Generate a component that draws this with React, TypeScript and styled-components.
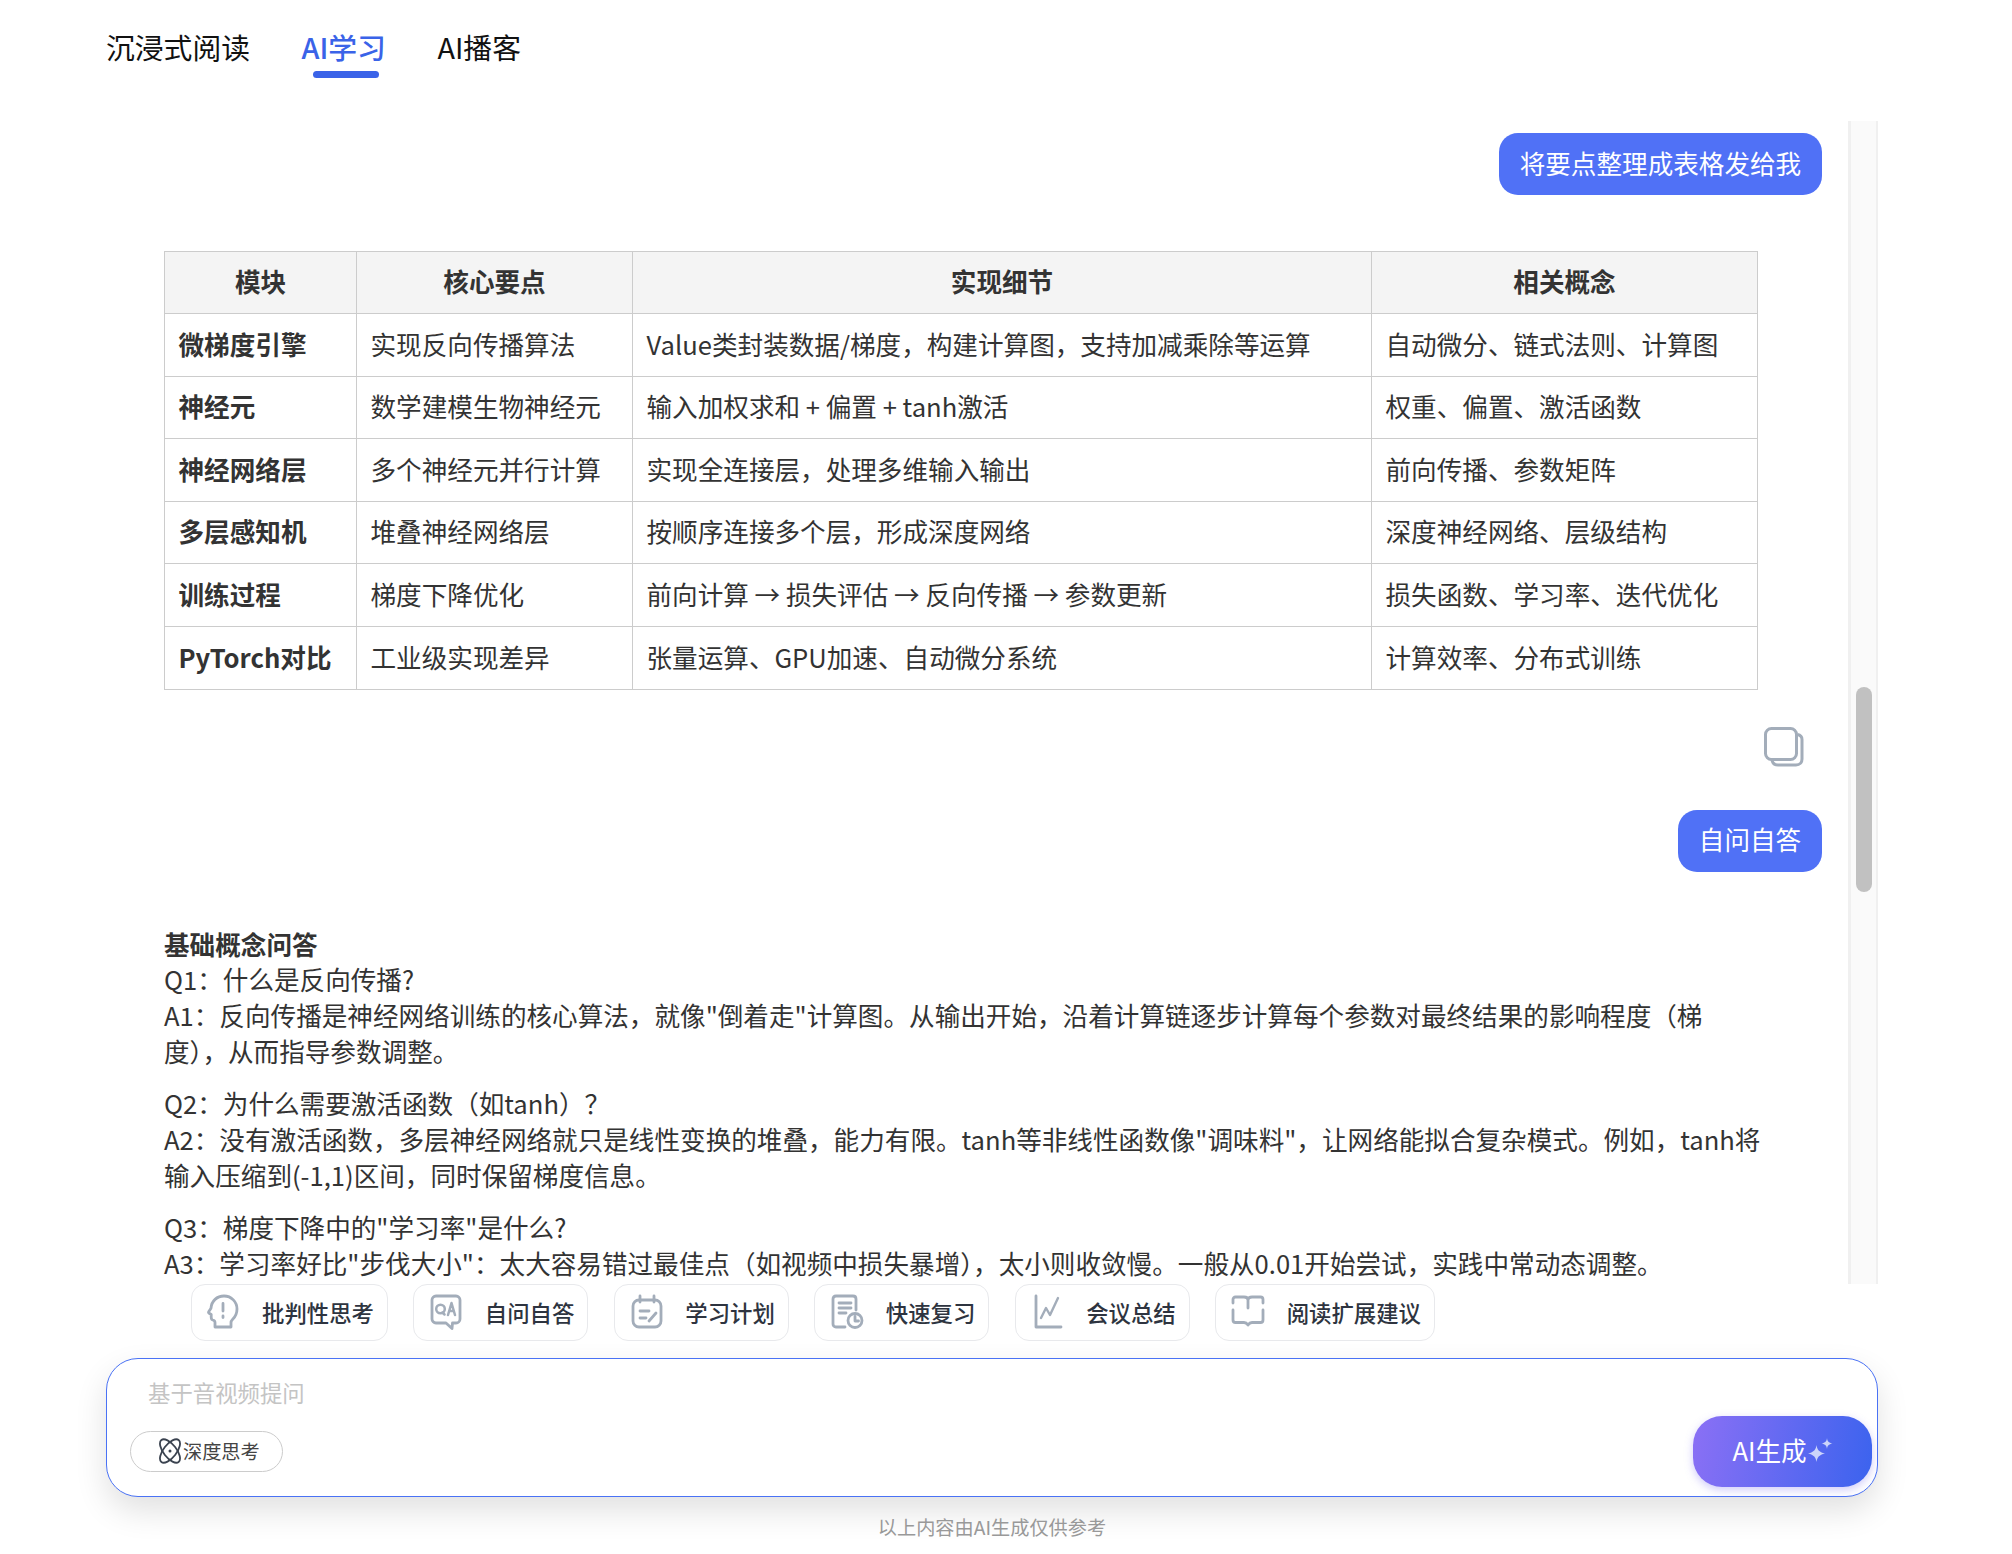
import type { ReactNode } from "react";
import styled, { createGlobalStyle } from "styled-components";

const GlobalStyle = createGlobalStyle`
  html, body {
    margin: 0;
    padding: 0;
    background: #fff;
  }
  body {
    font-family: "Noto Sans CJK SC", "Noto Sans", sans-serif;
    overflow: hidden;
  }
`;

const tableRows = [
  ["微梯度引擎", "实现反向传播算法", "Value类封装数据/梯度，构建计算图，支持加减乘除等运算", "自动微分、链式法则、计算图"],
  ["神经元", "数学建模生物神经元", "输入加权求和 + 偏置 + tanh激活", "权重、偏置、激活函数"],
  ["神经网络层", "多个神经元并行计算", "实现全连接层，处理多维输入输出", "前向传播、参数矩阵"],
  ["多层感知机", "堆叠神经网络层", "按顺序连接多个层，形成深度网络", "深度神经网络、层级结构"],
  ["训练过程", "梯度下降优化", "前向计算 → 损失评估 → 反向传播 → 参数更新", "损失函数、学习率、迭代优化"],
  ["PyTorch对比", "工业级实现差异", "张量运算、GPU加速、自动微分系统", "计算效率、分布式训练"],
];

const IconSvg = ({ children }: { children: ReactNode }) => (
  <svg width="34" height="36" viewBox="0 0 34 36" fill="none" stroke="#a3adba" strokeWidth="2.800" strokeLinecap="round" strokeLinejoin="round">
    {children}
  </svg>
);

const chips: { label: string; icon: ReactNode }[] = [
  {
    label: "批判性思考",
    icon: (
      <IconSvg>
        <path d="M8 33v-4.500c0-1.500-1-2.200-2.200-2.500-1.800-.5-1.600-2-1.600-3.500v-2L1.800 19c-.6-.5-.3-1 .2-1.800l2-3C4.500 7 10 2 17 2c7.500 0 13 6 13 13 0 4.500-1.800 8-4.500 10.500-1 1-1.500 1.800-1.500 3.300V33z" />
        <path d="M16 9.500v7.500M16 22v1.500" />
      </IconSvg>
    ),
  },
  {
    label: "自问自答",
    icon: (
      <IconSvg>
        <path d="M7 2h20c2.200 0 4 1.800 4 4v19c0 2.200-1.800 4-4 4h-3.500l-.5 5.500-6-5.500H7c-2.200 0-4-1.800-4-4V6c0-2.200 1.800-4 4-4z" />
        <circle cx="11.500" cy="15" r="4.300" strokeWidth="2.500" />
        <path d="M13.500 18.500l2 2M19 21l3.500-12 3.500 12M20.200 17h4.600" strokeWidth="2.500" />
      </IconSvg>
    ),
  },
  {
    label: "学习计划",
    icon: (
      <IconSvg>
        <rect x="3" y="6" width="28" height="27" rx="6" />
        <path d="M10 2v6M24 2v6M10 17h9M10 24h6M19 27l7-8" />
      </IconSvg>
    ),
  },
  {
    label: "快速复习",
    icon: (
      <IconSvg>
        <path d="M15 33H6c-2 0-3-1.300-3-3V5c0-1.800 1-3 3-3h17c2 0 3 1.200 3 3v11" />
        <path d="M9 9h12M9 14h12M9 19h7" />
        <circle cx="25" cy="26.500" r="7" />
        <path d="M25 22.500v4.500h3.500" />
      </IconSvg>
    ),
  },
  {
    label: "会议总结",
    icon: (
      <IconSvg>
        <path d="M5 2v31h25" />
        <path d="M10 24l5-10 4 7 8-17" strokeWidth="2.400" />
      </IconSvg>
    ),
  },
  {
    label: "阅读扩展建议",
    icon: (
      <IconSvg>
        <path d="M2 9V5.500C2 4 3 3 4.500 3h8.500c2.500 0 4 1 4 3 0-2 1.500-3 4-3h8.500C31 3 32 4 32 5.500V9M2 16v10c0 1.500 1 2.500 2.500 2.500H13c2 0 3 1 4 2.500 1-1.500 2-2.500 4-2.500h8.500c1.500 0 2.500-1 2.500-2.500V16M17 6v8" />
      </IconSvg>
    ),
  },
];

const App = () => {
  return (
    <Page>
      <GlobalStyle />
      <TabBar>
        <Tab>沉浸式阅读</Tab>
        <Tab $active>AI学习</Tab>
        <Tab>AI播客</Tab>
      </TabBar>

      <Panel>
        <Thread>
          <Bubble>将要点整理成表格发给我</Bubble>
          <Table>
            <thead>
              <tr>
                <th>模块</th>
                <th>核心要点</th>
                <th>实现细节</th>
                <th>相关概念</th>
              </tr>
            </thead>
            <tbody>
              {tableRows.map((row) => (
                <tr key={row[0]}>
                  {row.map((cell, i) =>
                    i === 0 ? <td key={i}><strong>{cell}</strong></td> : <td key={i}>{cell}</td>
                  )}
                </tr>
              ))}
            </tbody>
          </Table>
          <CopyButton>
            <svg width="40" height="40" viewBox="0 0 40 40" fill="none" stroke="#a3adba" strokeWidth="3">
              <path d="M33.500 7.500c2.500.5 4.500 2 4.500 5V32c0 3.500-2.200 6-6 6H14c-3 0-5.500-2-6-5" />
              <rect x="1.500" y="1.500" width="31" height="31" rx="6" />
            </svg>
          </CopyButton>
          <Bubble>自问自答</Bubble>
          <Answer>
            <p>
              <strong>基础概念问答</strong>
              <br />
              Q1：什么是反向传播?
              <br />
              A1：反向传播是神经网络训练的核心算法，就像"倒着走"计算图。从输出开始，沿着计算链逐步计算每个参数对最终结果的影响程度（梯度），从而指导参数调整。
            </p>
            <p>
              Q2：为什么需要激活函数（如tanh）？
              <br />
              A2：没有激活函数，多层神经网络就只是线性变换的堆叠，能力有限。tanh等非线性函数像"调味料"，让网络能拟合复杂模式。例如，tanh将输入压缩到(-1,1)区间，同时保留梯度信息。
            </p>
            <p>
              Q3：梯度下降中的"学习率"是什么?
              <br />
              A3：学习率好比"步伐大小"：太大容易错过最佳点（如视频中损失暴增），太小则收敛慢。一般从0.01开始尝试，实践中常动态调整。
            </p>
          </Answer>
        </Thread>
        <ScrollTrack>
          <ScrollThumb />
        </ScrollTrack>
      </Panel>

      <ChipRow>
        {chips.map((chip) => (
          <Chip key={chip.label}>
            <ChipIcon>{chip.icon}</ChipIcon>
            {chip.label}
          </Chip>
        ))}
      </ChipRow>

      <InputBox>
        <Placeholder>基于音视频提问</Placeholder>
        <InputFooter>
          <ThinkPill>
            <svg width="24" height="26" viewBox="0 0 24 26" fill="none" stroke="#3b4350" strokeWidth="1.800">
              <ellipse cx="12" cy="13" rx="6.500" ry="14" transform="rotate(-38 12 13)" />
              <ellipse cx="12" cy="13" rx="6.500" ry="14" transform="rotate(38 12 13)" />
              <circle cx="12" cy="13" r="1.500" fill="#3b4350" stroke="none" />
            </svg>
            深度思考
          </ThinkPill>
          <GenerateButton>
            AI生成
            <svg width="25" height="24" viewBox="0 0 25 24" fill="#ccd4fa">
              <path d="M8.500 7c.6 4.600 2.400 7 8.500 8.500-6.100 1.500-7.900 3.900-8.500 8.500-.6-4.600-2.400-7-8.500-8.500 6.100-1.500 7.900-3.900 8.500-8.500z" />
              <path d="M19 0c.4 3.300 1.600 4.800 5.500 5.500-3.900.7-5.100 2.200-5.500 5.500-.4-3.300-1.600-4.800-5.500-5.500 3.900-.7 5.100-2.200 5.500-5.500z" />
            </svg>
          </GenerateButton>
        </InputFooter>
      </InputBox>

      <Disclaimer>以上内容由AI生成仅供参考</Disclaimer>
    </Page>
  );
};

export default App;

const Page = styled.div`
  width: 2012px;
  height: 1554px;
  padding: 0 134px 0 106px;
  box-sizing: border-box;
  display: flex;
  flex-direction: column;
  color: #333;
`;

const TabBar = styled.div`
  height: 121px;
  flex: none;
  box-sizing: border-box;
  padding-top: 27px;
  display: flex;
  align-items: flex-start;
  gap: 51.5px;
`;

const Tab = styled.div<{ $active?: boolean }>`
  position: relative;
  font-size: 28.8px;
  line-height: 40px;
  font-weight: ${(p) => (p.$active ? 500 : 400)};
  color: ${(p) => (p.$active ? "#3a63e8" : "#111")};

  ${(p) =>
    p.$active &&
    `
    &::after {
      content: "";
      position: absolute;
      left: 11px;
      bottom: -11px;
      width: 66px;
      height: 7px;
      border-radius: 4px;
      background: #3a63e8;
    }
  `}
`;

const Panel = styled.div`
  height: 1163px;
  flex: none;
  display: flex;
  overflow: hidden;
`;

const Thread = styled.div`
  flex: 1;
  min-width: 0;
  box-sizing: border-box;
  padding: 12px 20px 0 58px;
  display: flex;
  flex-direction: column;
  align-items: flex-end;
  font-size: 25.6px;
  line-height: 35.84px;
`;

const Bubble = styled.div`
  height: 62px;
  flex: none;
  margin-right: 6px;
  box-sizing: border-box;
  padding: 0 20.8px 2.5px;
  display: flex;
  align-items: center;
  border-radius: 19px;
  background: #5071f6;
  color: #fff;
`;

const Table = styled.table`
  width: 1594px;
  flex: none;
  margin: 56px 70px 0 0;
  border-collapse: collapse;
  table-layout: fixed;

  th,
  td {
    height: 62.6px;
    box-sizing: border-box;
    padding: 0 13.5px 2.5px;
    border: 1.5px solid #ccc;
    font-weight: 400;
    text-align: left;
  }
  th {
    height: 62px;
    padding-bottom: 3.5px;
    background: #f4f4f4;
    font-weight: 700;
    text-align: center;
  }
  strong {
    font-weight: 700;
  }
  th:nth-child(1) { width: 192px; }
  th:nth-child(2) { width: 276px; }
  th:nth-child(3) { width: 739px; }
`;

const CopyButton = styled.div`
  height: 40px;
  flex: none;
  margin: 37px 24px 43px 0;
`;

const Answer = styled.div`
  width: 1600px;
  flex: none;
  margin: 54px 64px 0 0;

  p {
    margin: 0 0 16.5px;
  }
  strong {
    font-weight: 700;
  }
`;

const ScrollTrack = styled.div`
  width: 30px;
  flex: none;
  box-sizing: border-box;
  border-left: 3px solid #f0f0f0;
  border-right: 2px solid #f0f0f0;
  background: #fafafa;
  padding: 566px 4px 0 5px;
`;

const ScrollThumb = styled.div`
  height: 205px;
  border-radius: 8px;
  background: #c1c1c1;
`;

const ChipRow = styled.div`
  flex: none;
  display: flex;
  gap: 25.6px;
  padding-left: 84.5px;
  margin-bottom: 17px;
`;

const Chip = styled.div`
  height: 57px;
  box-sizing: border-box;
  padding: 0 12.8px 2px 15px;
  display: flex;
  align-items: center;
  gap: 21.5px;
  border: 1.3px solid #e8e9ec;
  border-radius: 14px;
  font-size: 22.4px;
  font-weight: 500;
  color: #2e3440;
`;

const ChipIcon = styled.span`
  width: 34px;
  height: 36px;
  display: flex;
  flex: none;
`;

const InputBox = styled.div`
  height: 139px;
  flex: none;
  box-sizing: border-box;
  padding: 0 5px 9px 23px;
  display: flex;
  flex-direction: column;
  justify-content: space-between;
  border: 1.5px solid #4a72f5;
  border-radius: 32px;
  background: #fff;
  box-shadow: 0 14px 32px rgba(0, 0, 0, 0.12);
`;

const Placeholder = styled.div`
  padding: 17px 0 0 18px;
  font-size: 22.4px;
  line-height: 32px;
  color: #c4c4c4;
`;

const InputFooter = styled.div`
  display: flex;
  align-items: center;
  justify-content: space-between;
`;

const ThinkPill = styled.div`
  width: 153px;
  height: 41px;
  box-sizing: border-box;
  padding: 0 0 1px 27px;
  display: flex;
  align-items: center;
  gap: 1px;
  border: 1.3px solid #ccc;
  border-radius: 21px;
  font-size: 19.2px;
  color: #444;
`;

const GenerateButton = styled.div`
  width: 179px;
  height: 71px;
  box-sizing: border-box;
  padding-bottom: 4px;
  display: flex;
  align-items: center;
  justify-content: center;
  gap: 1px;
  border-radius: 29px;
  background: linear-gradient(100deg, #8b70f5 0%, #3b63ee 100%);
  box-shadow: 0 3px 8px rgba(120, 110, 240, 0.35);
  font-size: 25.6px;
  color: #fff;
`;

const Disclaimer = styled.div`
  margin-top: 16px;
  text-align: center;
  font-size: 19.2px;
  line-height: 28px;
  color: #999;
`;
